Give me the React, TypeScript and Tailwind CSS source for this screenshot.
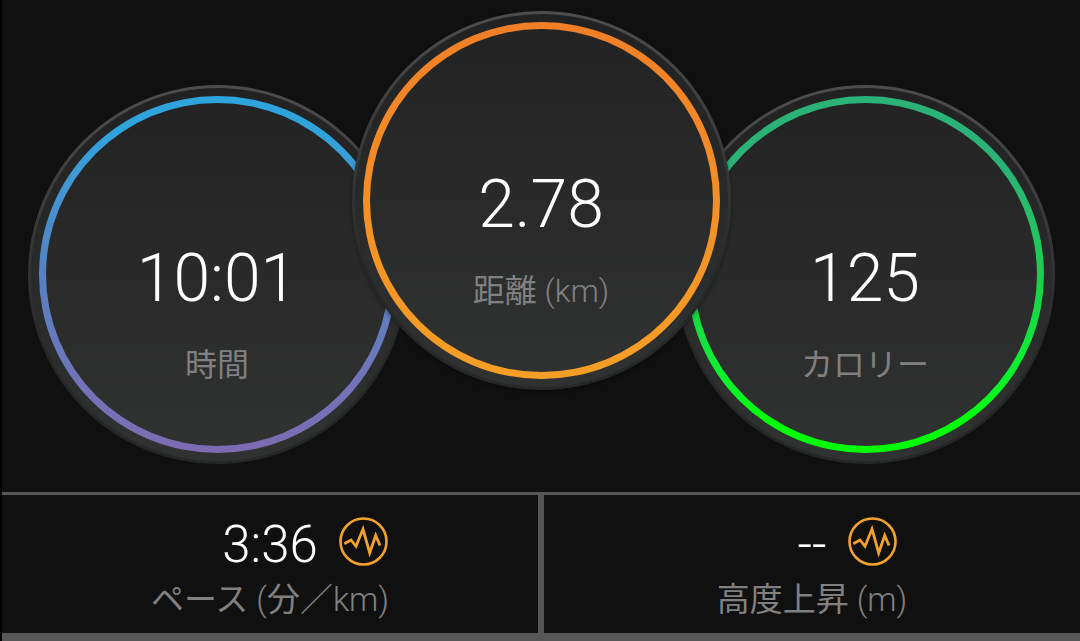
import clsx from 'clsx';
import type { ReactNode } from 'react';

type Dial = {
  value: string;
  label: string;
  unit?: ReactNode;
  ring: string;
  className: string;
};

const dials: Dial[] = [
  {
    value: '10:01',
    label: '時間',
    ring: 'bg-linear-to-b from-[#2fa3dc] from-10% via-[#5581c4] to-[#7e6bb2]',
    className: 'mt-[74px]',
  },
  {
    value: '2.78',
    label: '距離',
    unit: '(km)',
    ring: 'bg-linear-to-b from-[#f07f27] to-[#f59f26]',
    className: 'z-10 -mx-[55px] shadow-[0_2px_4px_rgba(0,0,0,0.35)]',
  },
  {
    value: '125',
    label: 'カロリー',
    ring: 'bg-linear-to-b from-[#2bb277] from-20% via-[#1bce4c] via-50% to-[#00ff06] to-90%',
    className: 'mt-[74px]',
  },
];

const stats: { value: string; label: string; unit: ReactNode }[] = [
  {
    value: '3:36',
    label: 'ペース',
    unit: (
      <>
        (<span className="font-normal">分</span>／km)
      </>
    ),
  },
  { value: '--', label: '高度上昇', unit: '(m)' },
];

const PulseIcon = () => (
  <svg viewBox="0 0 49 49" fill="none" stroke="#f2a12c" className="size-[49px]" aria-hidden="true">
    <circle cx="24.5" cy="24.5" r="23" strokeWidth="2.6" />
    <path d="M5.3 26.7 12 23l5 6.3 7-17.3 6.7 24 6-17.5 4.3 10" strokeWidth="2.8" />
  </svg>
);

const Label = ({ label, unit }: { label: string; unit?: ReactNode }) => (
  <>
    <span className="font-normal">{label}</span>
    {unit && <span> {unit}</span>}
  </>
);

const DialCard = ({ value, label, unit, ring, className }: Dial) => (
  <div
    className={clsx(
      'relative size-[379px] shrink-0 rounded-full bg-linear-to-b from-[#4d4d4d] to-[#262727] to-70% p-[3px]',
      className
    )}
  >
    {/* Dark rim */}
    <div className="h-full rounded-full bg-linear-to-b from-[#212121] to-[#303232] p-[8px]">
      {/* Coloured ring */}
      <div className={clsx('h-full rounded-full p-[7px]', ring)}>
        <div className="flex h-full flex-col items-center rounded-full bg-linear-to-b from-[#232323] to-[#303131] pt-[142px]">
          <dd className="text-[66px] leading-[68px] text-white">{value}</dd>
          <dt className="order-last mt-8 text-[32px] leading-10 text-[#808080]">
            <Label label={label} unit={unit} />
          </dt>
        </div>
      </div>
    </div>
  </div>
);

const App = () => {
  return (
    <main className="border-l-2 border-black bg-[#101010] font-['Roboto','Noto_Sans_CJK_JP',sans-serif] font-light">
      <dl className="flex justify-center overflow-hidden pt-[11px] pb-7">
        {dials.map((dial) => (
          <DialCard key={dial.label} {...dial} />
        ))}
      </dl>

      {/* Bottom stats */}
      <dl className="grid grid-cols-2 gap-[6px] border-t-[3px] border-b-8 border-[#575757] bg-[#555555]">
        {stats.map((stat) => (
          <div key={stat.label} className="flex flex-col bg-[#101010] pt-[22px] pb-[13px]">
            <dd className="grid grid-cols-[1fr_auto_1fr] items-start gap-[21px] text-[51px] leading-[55px] text-white">
              <span className="col-start-2">{stat.value}</span>
              <PulseIcon />
            </dd>
            <dt className="mt-2 text-center text-[33px] leading-10 text-[#808080]">
              <Label label={stat.label} unit={stat.unit} />
            </dt>
          </div>
        ))}
      </dl>
    </main>
  );
};

export default App;
